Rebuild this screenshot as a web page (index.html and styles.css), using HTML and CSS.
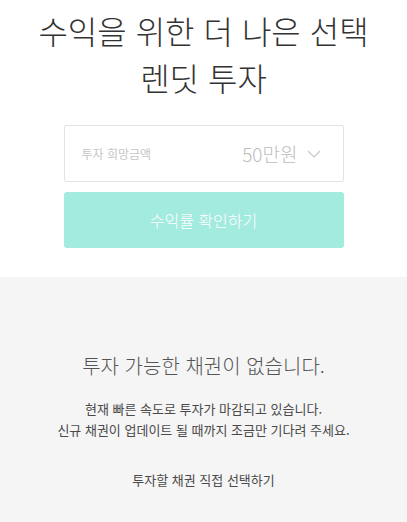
FILE: index.html
```html
<!DOCTYPE html>
<html lang="ko">
<head>
  <meta charset="UTF-8" />
  <meta name="viewport" content="width=device-width, initial-scale=1.0" />
  <title>렌딧 투자</title>
  <link rel="stylesheet" href="styles.css">
</head>
<body>
  <section class="hero">
    <h1>수익을 위한 더 나은 선택<br>렌딧 투자</h1>
    <div class="amount">
      <span class="amount-label">투자 희망금액</span>
      <span class="amount-value">50만원
        <svg class="chevron" width="14" height="8" viewBox="0 0 14 8"><path d="M1 1 L7 7 L13 1" fill="none" stroke="#c8c8c8" stroke-width="1.2"/></svg>
      </span>
    </div>
    <button class="check-btn">수익률 확인하기</button>
  </section>

  <section class="empty">
    <h2>투자 가능한 채권이 없습니다.</h2>
    <p>현재 빠른 속도로 투자가 마감되고 있습니다.<br>신규 채권이 업데이트 될 때까지 조금만 기다려 주세요.</p>
    <a class="pick-link" href="#">투자할 채권 직접 선택하기</a>
  </section>
</body>
</html>
```

FILE: styles.css
```css
* {
  box-sizing: border-box;
}

body {
  margin: 0;
  font-family: "Noto Sans CJK KR", "Noto Sans", sans-serif;
  background: #fff;
  color: #333;
}

.hero {
  display: flex;
  flex-direction: column;
  align-items: center;
  padding: 7px 0 29px;
}

.hero h1 {
  margin: 0 0 24px;
  font-family: "Noto Sans CJK KR Light", "Noto Sans CJK KR", sans-serif;
  font-size: 32px;
  font-weight: 300;
  line-height: 47px;
  text-align: center;
  color: #333;
}

.amount {
  width: 280px;
  height: 57px;
  border: 1px solid #e3e3e3;
  border-radius: 2px;
  display: flex;
  justify-content: space-between;
  align-items: center;
  padding: 0 22px 0 17px;
}

.amount-label {
  font-size: 12px;
  color: #c6c6c6;
}

.amount-value {
  display: flex;
  align-items: center;
  gap: 9px;
  font-family: "Noto Sans CJK KR Light", "Noto Sans CJK KR", sans-serif;
  font-size: 19px;
  font-weight: 300;
  color: #bdbdbd;
}

.check-btn {
  margin-top: 10px;
  width: 280px;
  height: 56px;
  border: none;
  border-radius: 3px;
  background: #a3eadf;
  color: #fff;
  font-family: "Noto Sans CJK KR Light", "Noto Sans CJK KR", sans-serif;
  font-size: 16px;
}

.empty {
  background: #f5f5f5;
  min-height: 246px;
  padding: 74px 0 20px;
  text-align: center;
}

.empty h2 {
  margin: 0;
  font-family: "Noto Sans CJK KR Light", "Noto Sans CJK KR", sans-serif;
  font-size: 20px;
  font-weight: 300;
  color: #555;
}

.empty p {
  margin: 18px 0 0;
  font-size: 13px;
  line-height: 21px;
  color: #4a4a4a;
}

.pick-link {
  display: inline-block;
  margin-top: 30px;
  font-size: 13px;
  color: #4a4a4a;
  text-decoration: none;
}
```
